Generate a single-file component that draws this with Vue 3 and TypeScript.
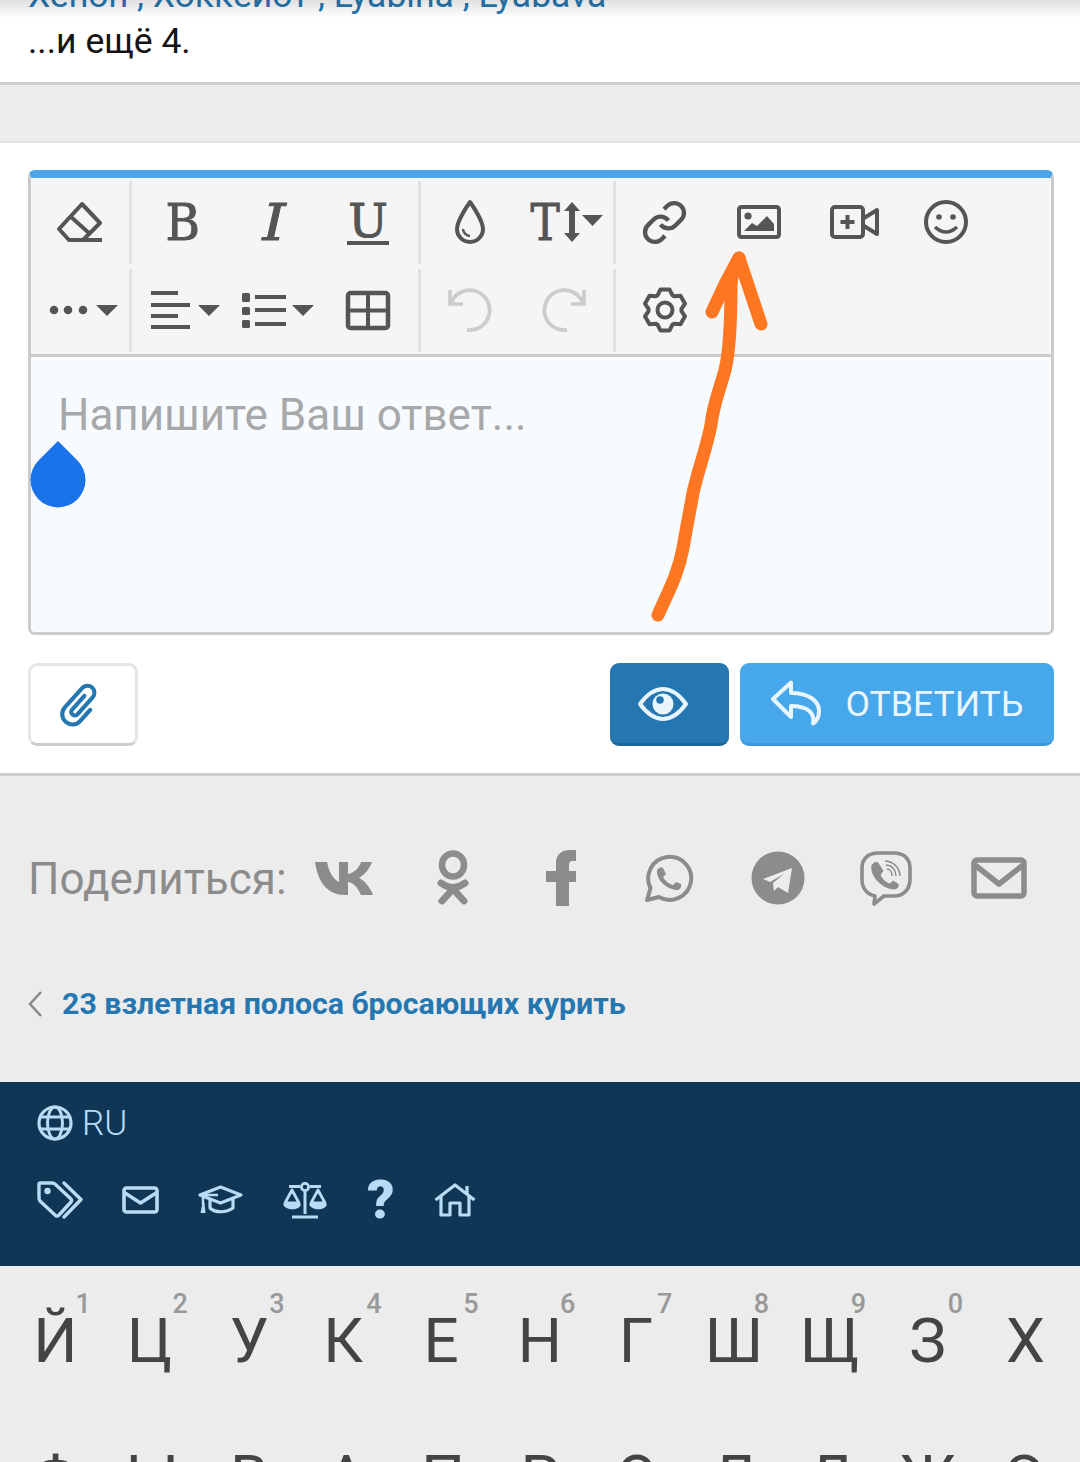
<script setup lang="ts">
// [letter, digit, nudge] - the keyboard does not space its letters quite evenly
const topKeys: [string, string, number][] = [
  ['Й', '1', 0], ['Ц', '2', -3], ['У', '3', 0], ['К', '4', -3], ['Е', '5', -2], ['Н', '6', 0],
  ['Г', '7', -1], ['Ш', '8', 0], ['Щ', '9', -1], ['З', '0', 0], ['Х', '', 1]
]
const homeKeys: string[] = ['Ф', 'Ы', 'В', 'А', 'П', 'Р', 'О', 'Л', 'Д', 'Ж', 'Э']

// six tooth cog for the settings button
function cogPath(cx: number, cy: number, outer: number, inner: number): string {
  const pts: string[] = []
  for (let i = 0; i < 6; i++) {
    const a = -Math.PI / 2 + (i * Math.PI) / 3
    const offs: [number, number][] = [[-0.46, inner], [-0.22, outer], [0.22, outer], [0.46, inner]]
    for (const [d, r] of offs) {
      pts.push(`${(cx + r * Math.cos(a + d)).toFixed(2)} ${(cy + r * Math.sin(a + d)).toFixed(2)}`)
    }
  }
  return 'M' + pts.join('L') + 'Z'
}
const cog = cogPath(24, 24, 21, 16.5)
</script>

<template>
  <div class="page">
    <section class="likes">
      <div class="names">Xenon , Хоккейот , Lyabina , Lyabava</div>
      <div class="more">...и ещё 4.</div>
    </section>
    <div class="gap-band"></div>

    <section class="reply">
      <div class="editor">
        <div class="toolbar">
          <div class="tb-row">
            <div class="group g1">
              <div class="cell">
                <svg width="46" height="42" viewBox="0 0 46 42" class="ic">
                  <path d="M25 3 L43 22 L26 39 H12 L2 28 Z M13 15 L33 33 M11 39 H45" stroke-width="4" />
                </svg>
              </div>
            </div>
            <i class="sep"></i>
            <div class="group g2">
              <div class="cell"><span class="glyph bold">B</span></div>
              <div class="cell"><span class="glyph ital">I</span></div>
              <div class="cell"><span class="glyph under">U</span></div>
            </div>
            <i class="sep"></i>
            <div class="group g3">
              <div class="cell">
                <svg width="32" height="46" viewBox="0 0 32 46" class="ic">
                  <path d="M16 3 C16 3 29 21 29 30 A13 13 0 0 1 3 30 C3 21 16 3 16 3 Z" stroke-width="4" />
                  <path d="M9 30 a7.500 7.500 0 0 0 7 7" stroke-width="2.500" />
                </svg>
              </div>
              <div class="cell size-cell">
                <span class="glyph size-t">T</span>
                <svg width="18" height="40" viewBox="0 0 18 40" class="size-arrow">
                  <path d="M9 0 L17 9 H12 V31 H17 L9 40 L1 31 H6 V9 H1 Z" />
                </svg>
                <svg width="21" height="11" viewBox="0 0 21 11" class="caret"><path d="M0 0 H21 L10.500 11 Z" /></svg>
              </div>
            </div>
            <i class="sep"></i>
            <div class="group g4">
              <div class="cell">
                <svg width="47" height="47" viewBox="0 0 24 24" class="ic">
                  <path d="M10 13a5 5 0 0 0 7.540.54l3-3a5 5 0 0 0-7.070-7.070l-1.720 1.710" stroke-width="2.200" />
                  <path d="M14 11a5 5 0 0 0-7.540-.54l-3 3a5 5 0 0 0 7.070 7.070l1.710-1.710" stroke-width="2.200" />
                </svg>
              </div>
              <div class="cell">
                <svg width="44" height="34" viewBox="0 0 44 34" class="ic nudge-l">
                  <rect x="2" y="2" width="40" height="30" rx="2.500" stroke-width="4" />
                  <circle cx="11" cy="11" r="3.600" class="solid" />
                  <path d="M7 26 L15 18 L20 21 L30 11 L37 19 V26 Z" class="solid" />
                </svg>
              </div>
              <div class="cell">
                <svg width="50" height="34" viewBox="0 0 50 34" class="ic">
                  <rect x="2" y="2" width="31" height="30" rx="3" stroke-width="4" />
                  <path d="M34 13 L47 5 V29 L34 21" stroke-width="4" />
                  <path d="M17.500 10 V24 M10.500 17 H24.500" stroke-width="4" />
                </svg>
              </div>
              <div class="cell smile-cell">
                <svg width="44" height="44" viewBox="0 0 44 44" class="ic nudge-l">
                  <circle cx="22" cy="22" r="20" stroke-width="4" />
                  <circle cx="15" cy="17" r="2.800" class="solid" />
                  <circle cx="29" cy="17" r="2.800" class="solid" />
                  <path d="M11 27 Q22 37 33 27" stroke-width="3.500" />
                </svg>
              </div>
            </div>
          </div>

          <div class="tb-row">
            <div class="group g1">
              <div class="cell">
                <svg width="98" height="88" viewBox="0 0 98 88" class="ic">
                  <circle cx="23" cy="44" r="4.300" class="solid" />
                  <circle cx="37" cy="44" r="4.300" class="solid" />
                  <circle cx="52" cy="44" r="4.300" class="solid" />
                  <path d="M65 39 H87 L76 50 Z" class="solid" />
                </svg>
              </div>
            </div>
            <i class="sep"></i>
            <div class="group g2">
              <div class="cell">
                <svg width="94" height="88" viewBox="0 0 94 88" class="ic">
                  <path d="M18 27 H45 M18 39 H57 M18 50 H45 M18 61 H57" stroke-width="4" />
                  <path d="M65 39 H87 L76 50 Z" class="solid" />
                </svg>
              </div>
              <div class="cell">
                <svg width="94" height="88" viewBox="0 0 94 88" class="ic">
                  <rect x="15" y="27" width="8" height="9" rx="1.500" class="solid" />
                  <rect x="15" y="41" width="8" height="8" rx="1.500" class="solid" />
                  <rect x="15" y="54" width="8" height="8" rx="1.500" class="solid" />
                  <path d="M28 31 H59 M28 44 H59 M28 58 H59" stroke-width="4" />
                  <path d="M65 39 H87 L76 50 Z" class="solid" />
                </svg>
              </div>
              <div class="cell">
                <svg width="46" height="41" viewBox="0 0 46 41" class="ic">
                  <rect x="3" y="3" width="40" height="35" rx="2.500" stroke-width="4.500" />
                  <path d="M3 20.500 H43 M23 3 V38" stroke-width="4" />
                </svg>
              </div>
            </div>
            <i class="sep"></i>
            <div class="group g3">
              <div class="cell">
                <svg width="46" height="44" viewBox="0 0 46 44" class="ic off">
                  <path d="M3 2 V16 H16" stroke-width="3.600" stroke-linejoin="miter" />
                  <path d="M4 15 A20 20 0 1 1 20 42" stroke-width="3.800" />
                </svg>
              </div>
              <div class="cell">
                <svg width="46" height="44" viewBox="0 0 46 44" class="ic off redo">
                  <path d="M43 2 V16 H30" stroke-width="3.600" stroke-linejoin="miter" />
                  <path d="M42 15 A20 20 0 1 0 26 42" stroke-width="3.800" />
                </svg>
              </div>
            </div>
            <i class="sep"></i>
            <div class="group g4">
              <div class="cell">
                <svg width="48" height="48" viewBox="0 0 48 48" class="ic">
                  <path :d="cog" stroke-width="4" />
                  <circle cx="24" cy="24" r="7.500" stroke-width="4" />
                </svg>
              </div>
            </div>
          </div>
        </div>
        <div class="input">
          <div class="placeholder">Напишите Ваш ответ...</div>
          <svg class="handle" width="56" height="67" viewBox="0 0 56 67">
            <path d="M28 0 L47 19 A27.500 27.500 0 1 1 9 19 Z" fill="#1a73e8" />
          </svg>
        </div>
      </div>

      <div class="actions">
        <button class="btn attach" type="button">
          <svg width="54" height="54" viewBox="0 0 50 50" fill="none" stroke="#2577b1" stroke-width="3.800" stroke-linecap="round">
            <path transform="rotate(42 25 25)" d="M35 22 V36 a9.500 9.500 0 0 1 -19 0 V12 a6.500 6.500 0 0 1 13 0 V33 a3.300 3.300 0 0 1 -6.600 0 V16" />
          </svg>
        </button>
        <span class="spring"></span>
        <button class="btn preview" type="button">
          <svg width="50" height="34" viewBox="0 0 50 34">
            <path d="M2 17 C10 6 17 2 25 2 C33 2 40 6 48 17 C40 28 33 32 25 32 C17 32 10 28 2 17 Z" fill="none" stroke="#e8f5fd" stroke-width="4" stroke-linejoin="round" />
            <circle cx="25" cy="17" r="10.500" fill="#e8f5fd" />
            <circle cx="22" cy="13" r="3.800" fill="#2577b1" />
          </svg>
        </button>
        <button class="btn send" type="button">
          <svg width="50" height="46" viewBox="0 0 50 46" fill="none" stroke="#e8f5fd" stroke-width="4" stroke-linejoin="round">
            <path d="M2 19 L20 2.500 V13 C38 13 48 21 48 31 C48 37 46 41 42 43.500 C44 34 38 26 20 26 V37 Z" />
          </svg>
          <span class="send-label">ОТВЕТИТЬ</span>
        </button>
      </div>
    </section>

    <section class="share-area">
      <div class="share">
        <span class="share-label">Поделиться:</span>
        <div class="share-icons">
          <a class="s-ic">
            <svg width="58" height="36" viewBox="0 0 58 36" fill="#8c8c8c">
              <path d="M0 2 H12 C14 12 18 19 24 22 V2 H33 V14 C39 13 44 8 46 2 H57 C54 10 49 15 44 18 C50 21 55 27 58 35 H46 C43 28 39 23 33 22 V35 H30 C13 35 3 23 0 2 Z" />
            </svg>
          </a>
          <a class="s-ic">
            <svg width="34" height="56" viewBox="0 0 34 56" fill="none" stroke="#8c8c8c" stroke-linecap="round">
              <ellipse cx="17" cy="15" rx="11" ry="11.500" stroke-width="6.500" />
              <path d="M5 33 Q17 42 29 33" stroke-width="7" />
              <path d="M17 39 L6 51 M17 39 L28 51" stroke-width="7" />
            </svg>
          </a>
          <a class="s-ic">
            <svg width="30" height="56" viewBox="0 0 30 56" fill="#8c8c8c">
              <path d="M10 56 V32 H0 V21 H10 V13 C10 4 16 0 24 0 H30 V11 H26 C24 11 23 13 23 15 V21 H30 V32 H23 V56 Z" />
            </svg>
          </a>
          <a class="s-ic">
            <svg width="50" height="50" viewBox="0 0 50 50">
              <path d="M3 47 L6.500 35 A21.500 21.500 0 1 1 15 44 Z" fill="none" stroke="#8c8c8c" stroke-width="4" stroke-linejoin="round" />
              <path d="M13 17 Q16 13 19 15 L22 21 L19 24 C21 28 25 31 29 32 L32 29 L37 31 Q38 35 34 37 C23 37 12 27 13 17 Z" fill="#8c8c8c" />
            </svg>
          </a>
          <a class="s-ic">
            <svg width="54" height="54" viewBox="0 0 54 54">
              <circle cx="27" cy="27" r="26.500" fill="#8c8c8c" />
              <path d="M12 28 L41 17 L37 42 L27 36 L23 40 L22 32 L33 23 L19 31 Z" fill="#ececec" />
            </svg>
          </a>
          <a class="s-ic">
            <svg width="54" height="56" viewBox="0 0 54 56" fill="none" stroke="#8c8c8c">
              <path d="M16 46 C8 44 3 38 3 30 V18 C3 9 9 3 19 3 H35 C45 3 51 9 51 18 V29 C51 39 45 46 35 46 H25 L15 54 Z" stroke-width="3.600" stroke-linejoin="round" />
              <path d="M13 15 Q16 11 19 13 L24 21 L21 25 C23 29 27 33 31 34 L34 31 L39 34 Q40 38 36 39 C24 39 11 27 13 15 Z" fill="#8c8c8c" />
              <path d="M26 11 C33 11 41 17 41 26 M27 15 C33 15 37 20 37 26 M28 19 C31 19 33 22 33 26" stroke-width="1.400" />
            </svg>
          </a>
          <a class="s-ic">
            <svg width="56" height="42" viewBox="0 0 56 42" fill="none" stroke="#8c8c8c" stroke-width="5.500" stroke-linejoin="round">
              <rect x="3" y="3" width="50" height="36" rx="3" />
              <path d="M4 8 L28 27 L52 8" />
            </svg>
          </a>
        </div>
      </div>
      <div class="back">
        <svg width="15" height="26" viewBox="0 0 15 26" fill="none" stroke="#888" stroke-width="2.500"><path d="M13 1 L2 13 L13 25" /></svg>
        <a class="back-link">23 взлетная полоса бросающих курить</a>
      </div>
    </section>

    <footer class="foot">
      <div class="lang">
        <svg width="36" height="36" viewBox="0 0 36 36" class="f-ic">
          <circle cx="18" cy="18" r="16" stroke-width="3.200" />
          <ellipse cx="18" cy="18" rx="7.500" ry="16" stroke-width="3" />
          <path d="M3 12 H33 M3 24 H33" stroke-width="3" />
        </svg>
        <span>RU</span>
      </div>
      <div class="foot-icons">
        <svg width="46" height="38" viewBox="0 0 46 38" class="f-ic">
          <path d="M3.500 2 H15 Q17 2 18 3 L34 18 Q35 19.500 34 21 L22 34 Q20 36 18 34 L3 20 Q2 19 2 17 V3.500 Q2 2 3.500 2 Z" stroke-width="3.400" />
          <circle cx="10.500" cy="10" r="3.200" class="f-solid" />
          <path d="M27 2 L44 18.500 L27 36" stroke-width="3.400" stroke-linecap="round" />
        </svg>
        <svg class="f-ic" width="37" height="28" viewBox="0 0 37 28">
          <rect x="2" y="2" width="33" height="24" rx="2.500" stroke-width="3.600" />
          <path d="M3 7 L18.500 17 L34 7" stroke-width="3.600" />
        </svg>
        <svg class="f-ic" width="45" height="30" viewBox="0 0 45 30">
          <path d="M2 10 L22.500 2 L43 10 L22.500 18 Z" stroke-width="3.200" />
          <path d="M12 14 V23 C17 28 28 28 35 23 V14" stroke-width="3.200" />
          <path d="M5 10 H20 M5 10 V20" stroke-width="2.500" />
          <path d="M2.500 28 L4.500 18 H6.500 L7.500 28 Z" class="f-solid" />
        </svg>
        <svg class="f-ic" width="46" height="38" viewBox="0 0 46 38">
          <circle cx="23" cy="6" r="3.600" stroke-width="2.800" />
          <path d="M7 5.500 H18 M28 5.500 H39 M23 10 V33 M10 36 H36" stroke-width="3" />
          <path d="M10 9 L3 22 H17 Z M36 9 L29 22 H43 Z" stroke-width="2.800" />
          <path d="M1 23 H19 C18 30 3 30 1 23 Z M27 23 H45 C44 30 29 30 27 23 Z" class="f-solid" />
        </svg>
        <span class="qmark">?</span>
        <svg class="f-ic" width="42" height="34" viewBox="0 0 42 34">
          <path d="M1.500 17 L21 2 L40.500 17" stroke-width="3.200" />
          <path d="M7 13 V32 H16 V20 H26 V32 H35 V13 M33 3 V11" stroke-width="3.200" />
        </svg>
      </div>
    </footer>

    <section class="keyboard">
      <div class="kb-row">
        <div v-for="k in topKeys" :key="k[0]" class="key">
          <sup v-if="k[1]" class="num">{{ k[1] }}</sup>
          <span class="letter" :style="{ transform: `translateX(${k[2]}px)` }">{{ k[0] }}</span>
        </div>
      </div>
      <div class="kb-row">
        <div v-for="k in homeKeys" :key="k" class="key"><span class="letter">{{ k }}</span></div>
      </div>
    </section>

    <div class="top-shade"></div>
    <svg class="scribble" width="1080" height="700" viewBox="0 0 1080 700" fill="none" stroke="#fd7622" stroke-width="13" stroke-linecap="round" stroke-linejoin="round">
      <path d="M658 615 C668 592 678 575 683 548 C687 525 690 510 693 493 C698 470 706 450 711 425 C713 405 719 392 725 370 C730 350 731 320 731 285 Q732 270 739 258" />
      <path d="M712 312 L726 282 L739 258 L761 324" />
    </svg>
  </div>
</template>

<style scoped>
.page {
  position: relative;
  width: 1080px;
  height: 1462px;
  overflow: hidden;
  display: flex;
  flex-direction: column;
  font-family: Roboto, "Noto Sans", sans-serif;
  background: #ececec;
}

.likes {
  height: 82px;
  flex: none;
  background: #fff;
  padding-left: 28px;
  overflow: hidden;
  border-bottom: 3px solid #cdcdcd;
}
.names {
  height: 46px;
  line-height: 46px;
  margin-top: -28px;
  font-size: 35.500px;
  color: #2577b1;
  white-space: nowrap;
}
.more {
  height: 46px;
  line-height: 46px;
  font-size: 35.500px;
  color: #141414;
}
.gap-band {
  height: 56px;
  flex: none;
  background: #ececec;
  border-bottom: 2px solid #e2e2e2;
}

.reply {
  flex: none;
  height: 633px;
  box-sizing: border-box;
  background: #fff;
  padding: 27px 26px 0 28px;
  border-bottom: 3px solid #cdcdcd;
}
.editor {
  height: 465px;
  box-sizing: border-box;
  border: 3px solid #c9cbcd;
  border-top: 8px solid #4aa6e8;
  border-radius: 7px;
  display: flex;
  flex-direction: column;
}
.toolbar {
  flex: none;
  background: #f5f5f5;
  border-bottom: 3px solid #c9cbcd;
}
.tb-row {
  display: flex;
  height: 88px;
}
.sep {
  flex: none;
  width: 3px;
  margin: 3px 0 2px;
  background: #e2e2e2;
}
.group {
  display: flex;
  flex: none;
  box-sizing: border-box;
}
.g1 { width: 98px; }
.g2 { width: 286px; padding: 0 3px 0 1px; }
.g3 { width: 192px; padding-left: 1px; }
.g4 { flex: 1; padding-left: 1px; }
.cell {
  flex: 1;
  display: flex;
  align-items: center;
  justify-content: center;
  color: #555;
}
.g4 .cell { flex: 0 0 95px; }
.g4 .smile-cell { flex: 0 0 89px; }
.ic {
  fill: none;
  stroke: #555;
  stroke-linejoin: round;
  stroke-linecap: butt;
}
.ic .solid {
  fill: #555;
  stroke: none;
}
.ic.off {
  stroke: #cccccc;
}
.nudge-l {
  margin-right: 2px;
}
.redo {
  margin-right: 3px;
}
.glyph {
  display: inline-block;
  font-family: "DejaVu Serif", serif;
  font-size: 51px;
  line-height: 1;
  color: #555;
  -webkit-text-stroke: 1px #555;
}
.bold {
  transform: scaleX(0.92);
  margin-left: 6px;
}
.ital {
  font-style: italic;
  transform: scaleX(1.15);
}
.under {
  font-size: 47px;
  line-height: 40px;
  height: 40px;
  padding: 0 1px;
  border-bottom: 4px solid #555;
  margin-top: 2px;
}
.size-cell {
  gap: 2px;
}
.size-t {
  transform: scaleX(0.86);
  margin-right: -1px;
}
.size-arrow {
  fill: #555;
}
.caret {
  fill: #555;
  margin-top: -3px;
  margin-left: -1px;
}

.input {
  position: relative;
  flex: 1;
  background: #f8fbfe;
  border-radius: 0 0 5px 5px;
  padding: 35px 28px 0 27px;
}
.placeholder {
  font-size: 44px;
  line-height: 46px;
  color: #a6a8aa;
}
.handle {
  position: absolute;
  left: -1px;
  top: 84px;
}

.actions {
  display: flex;
  margin-top: 28px;
  height: 83px;
  gap: 11px;
}
.spring {
  flex: 1;
}
.btn {
  display: flex;
  align-items: center;
  justify-content: center;
  box-sizing: border-box;
  padding: 0;
  height: 83px;
  border-radius: 9px;
  border: none;
  font-family: inherit;
}
.attach {
  width: 110px;
  background: #fff;
  border: 3px solid #e6e6e6;
  border-bottom-color: #cdcdcd;
}
.attach svg {
  margin-right: 6px;
}
.preview {
  width: 119px;
  background: #2577b1;
  border-bottom: 3px solid #1e6496;
}
.preview svg {
  margin: 2px 13px 0 0;
}
.send {
  width: 314px;
  gap: 25px;
  background: #47a7eb;
  border-bottom: 3px solid #3f97d6;
  color: #e8f5fd;
  font-size: 35.600px;
}
.send-label {
  margin-top: 2px;
}

.share-area {
  flex: none;
  height: 306px;
  box-sizing: border-box;
  padding: 72px 0 0 28px;
  background: #ececec;
}
.share {
  display: flex;
  align-items: center;
  height: 60px;
}
.share-label {
  font-size: 44px;
  color: #8c8c8c;
  width: 262px;
  flex: none;
  margin-top: 2px;
}
.share-icons {
  display: flex;
}
.s-ic {
  width: 108.400px;
  height: 60px;
  display: flex;
  align-items: center;
  justify-content: center;
}
.s-ic:last-child svg {
  margin-left: 9px;
}
.back {
  display: flex;
  align-items: center;
  gap: 19px;
  margin-top: 78px;
}
.back-link {
  font-size: 30.300px;
  font-weight: 700;
  color: #2577b1;
}

.foot {
  flex: none;
  height: 184px;
  box-sizing: border-box;
  background: #0f3655;
  padding: 21px 0 0 37px;
  color: #b9dcf6;
}
.lang {
  display: flex;
  align-items: center;
  gap: 9px;
  font-size: 35px;
  font-weight: 300;
  height: 40px;
}
.foot-icons {
  display: flex;
  align-items: center;
  margin-top: 35px;
  height: 44px;
  gap: 39px;
}
.f-ic {
  fill: none;
  stroke: #b9dcf6;
  stroke-linejoin: round;
}
.f-ic .f-solid {
  fill: #b9dcf6;
  stroke: none;
}
.qmark {
  font-size: 54px;
  font-weight: 900;
  line-height: 44px;
}

.keyboard {
  flex: 1;
  background: #ececec;
  padding: 0 7px;
}
.kb-row {
  display: flex;
  height: 137px;
  padding-top: 39px;
  box-sizing: border-box;
}
.key {
  position: relative;
  width: 97px;
  text-align: center;
  font-size: 62px;
  line-height: 72px;
  color: #444;
}
.letter {
  display: inline-block;
}
.num {
  position: absolute;
  left: 68.500px;
  top: -16px;
  font-size: 27px;
  font-weight: 500;
  line-height: 30px;
  color: #999;
  vertical-align: baseline;
}

.top-shade {
  position: absolute;
  left: 0;
  right: 0;
  top: 0;
  height: 18px;
  background: linear-gradient(rgba(0, 0, 0, 0.12), rgba(0, 0, 0, 0));
}
.scribble {
  position: absolute;
  left: 0;
  top: 0;
}
</style>

<style>
html, body {
  margin: 0;
  background: #ececec;
}
</style>
